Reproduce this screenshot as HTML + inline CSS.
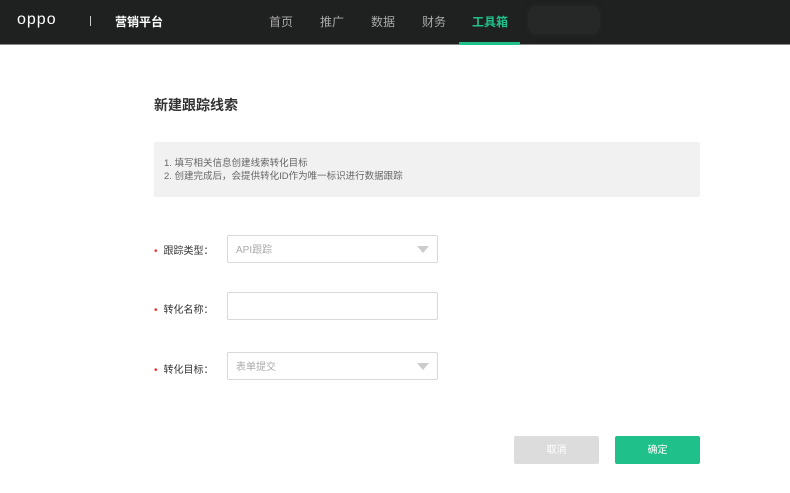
<!DOCTYPE html>
<html><head><meta charset="utf-8"><style>
body{margin:0;width:790px;height:493px;background:#fff;font-family:"Liberation Sans","Noto Sans CJK SC",sans-serif;position:relative;overflow:hidden}
.top{position:absolute;left:0;top:0;width:790px;height:44px;background:#1f2020;border-bottom:1px solid #888}
.t{position:absolute;color:#fff;font-size:12px;top:13px}
.nav{position:absolute;top:13px;font-size:12px;color:#aaa}
.abs{position:absolute}
.lab{position:absolute;left:154px;font-size:10px;color:#333}
.lab b{color:#e33;font-weight:normal;margin-right:6px}
.inp{position:absolute;left:227px;width:211px;height:28px;border:1px solid #d9d9d9;border-radius:2px;font-size:10px;color:#aaa;line-height:30px;box-sizing:border-box;padding-left:8px}
.tri{position:absolute;right:8px;top:10px;width:0;height:0;border-left:6px solid transparent;border-right:6px solid transparent;border-top:7px solid #ccc}
</style></head><body>
<div class="top">
<div class="t" style="left:17px;font-size:16px;top:11px;letter-spacing:1px">oppo</div>
<div class="abs" style="left:90px;top:16px;width:1px;height:10px;background:#ccc"></div>
<div class="t" style="left:115px;font-weight:bold">营销平台</div>
<div class="nav" style="left:269px">首页</div>
<div class="nav" style="left:320px">推广</div>
<div class="nav" style="left:371px">数据</div>
<div class="nav" style="left:422px">财务</div>
<div class="nav" style="left:472px;color:#1fc08a;font-weight:bold">工具箱</div>
<div class="abs" style="left:459px;top:42px;width:61px;height:3px;background:#1fc08a"></div>
<div class="abs" style="left:528px;top:6px;width:72px;height:28px;background:#262727;border-radius:8px;box-shadow:0 0 6px #262727"></div>
</div>
<div class="abs" style="left:154px;top:95px;font-size:14px;font-weight:bold;color:#333">新建跟踪线索</div>
<div class="abs" style="left:154px;top:142px;width:546px;height:55px;background:#f1f1f1;border-radius:2px;font-size:9.5px;color:#666;line-height:13px;box-sizing:border-box;padding:15px 10px">1. 填写相关信息创建线索转化目标<br>2. 创建完成后，会提供转化ID作为唯一标识进行数据跟踪</div>
<div class="lab" style="top:242px"><b>•</b>跟踪类型：</div>
<div class="inp" style="top:235px">API跟踪<div class="tri"></div></div>
<div class="lab" style="top:301px"><b>•</b>转化名称：</div>
<div class="inp" style="top:292px"></div>
<div class="lab" style="top:361px"><b>•</b>转化目标：</div>
<div class="inp" style="top:352px">表单提交<div class="tri"></div></div>
<div class="abs" style="left:514px;top:436px;width:85px;height:28px;background:#dcdcdc;color:#fff;font-size:10px;text-align:center;line-height:30px;border-radius:2px">取消</div>
<div class="abs" style="left:615px;top:436px;width:85px;height:28px;background:#1fc08a;color:#fff;font-size:10px;text-align:center;line-height:30px;border-radius:2px">确定</div>
</body></html>
